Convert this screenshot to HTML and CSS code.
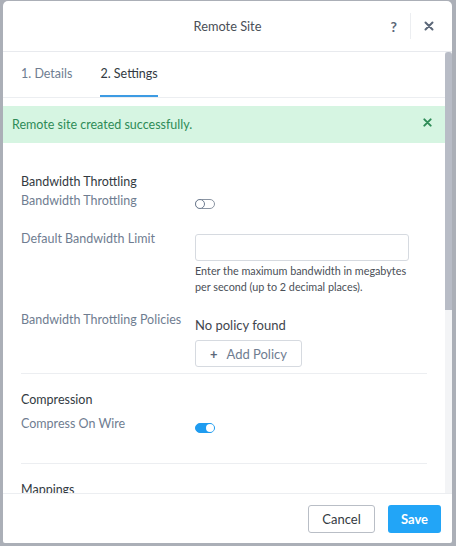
FILE: index.html
```html
<!DOCTYPE html>
<html lang="en">
<head>
    <meta charset="UTF-8">
    <meta name="viewport" content="width=device-width, initial-scale=1.0">
    <title>Remote Site</title>
    <link rel="stylesheet" href="styles.css">
</head>
<body>

<div class="modal">
    <div class="modal-header">
        <span class="modal-title">Remote Site</span>
        <div class="header-actions">
            <span class="help">?</span>
            <span class="divider-v"></span>
            <svg class="close" width="10" height="10" viewBox="0 0 10 10">
                <path d="M1.5 1.5 L8.5 8.5 M8.5 1.5 L1.5 8.5" stroke="#5b6778" stroke-width="2" stroke-linecap="round"/>
            </svg>
        </div>
    </div>

    <div class="modal-body">
        <div class="scroll-content">
            <div class="tabs">
                <span class="tab">1. Details</span>
                <span class="tab active">2. Settings</span>
            </div>

            <div class="alert">
                <span>Remote site created successfully.</span>
                <svg width="9" height="9" viewBox="0 0 10 10">
                    <path d="M1.5 1.5 L8.5 8.5 M8.5 1.5 L1.5 8.5" stroke="#2e8b57" stroke-width="2.2" stroke-linecap="round"/>
                </svg>
            </div>

            <div class="form">
                <div class="section">
                    <h3>Bandwidth Throttling</h3>
                    <div class="row row-throttle">
                        <label>Bandwidth Throttling</label>
                        <div class="control"><span class="toggle"></span></div>
                    </div>
                    <div class="row">
                        <label>Default Bandwidth Limit</label>
                        <div class="control">
                            <input type="text" class="text-input">
                            <p class="help-text">Enter the maximum bandwidth in megabytes per second (up to 2 decimal places).</p>
                        </div>
                    </div>
                    <div class="row row-policies">
                        <label>Bandwidth Throttling Policies</label>
                        <div class="control">
                            <p class="empty">No policy found</p>
                            <button class="btn btn-add"><span class="plus">+</span> Add Policy</button>
                        </div>
                    </div>
                </div>

                <div class="section">
                    <h3>Compression</h3>
                    <div class="row row-compress">
                        <label>Compress On Wire</label>
                        <div class="control"><span class="toggle on"></span></div>
                    </div>
                </div>

                <div class="section last">
                    <h3>Mappings</h3>
                </div>
            </div>
        </div>

        <!-- scroll track for the body -->
        <div class="scrollbar">
            <div class="scrollbar-thumb"></div>
        </div>
    </div>

    <div class="modal-footer">
        <button class="btn btn-cancel">Cancel</button>
        <button class="btn btn-save">Save</button>
    </div>
</div>

</body>
</html>
```

FILE: styles.css
```css
html, body {
    height: 100%;
}
body {
    font-family: Lato, "Open Sans", Arial, sans-serif;
    font-size: 12.5px;
    background-color: #abafb7;
    margin: 0;
    padding: 1px 4px 3px 3px;
    box-sizing: border-box;
}
.modal {
    height: 100%;
    background-color: white;
    border-radius: 5px 5px 2px 2px;
    display: flex;
    flex-direction: column;
    overflow: hidden;
}
.modal-header {
    height: 50px;
    flex: none;
    border-bottom: 1px solid #e8eaee;
    display: flex;
    align-items: center;
    justify-content: center;
    position: relative;
}
.modal-title {
    color: #4a4f57;
    font-size: 12.8px;
}
.header-actions {
    position: absolute;
    right: 18px;
    top: 0;
    height: 50px;
    display: flex;
    align-items: center;
}
.help {
    color: #5b6778;
    font-weight: bold;
    font-size: 14px;
}
.divider-v {
    width: 1px;
    height: 26px;
    background-color: #eceef1;
    margin: 0 13px 0 13px;
}
.close {
    display: block;
}
.modal-body {
    flex: 1;
    display: flex;
    overflow: hidden;
}
.scroll-content {
    flex: 1;
    overflow: hidden;
}
.scrollbar {
    width: 7px;
    flex: none;
    background-color: #f3f4f6;
}
.scrollbar-thumb {
    height: 258px;
    background-color: #b8bcc6;
    border-radius: 3px 3px 0 0;
}
.tabs {
    height: 45px;
    border-bottom: 1px solid #eceef1;
    padding-left: 18px;
    display: flex;
    gap: 28px;
}
.tab {
    color: #6f7d91;
    line-height: 44px;
    border-bottom: 2px solid transparent;
}
.tab.active {
    color: #333a42;
    border-bottom-color: #3d9be3;
}
.alert {
    margin-top: 8px;
    height: 37px;
    background-color: #d6f5e2;
    color: #2e8b57;
    padding: 0 13px 0 9px;
    display: flex;
    align-items: center;
    justify-content: space-between;
}
.alert svg {
    margin-top: -4px;
}
.form {
    padding: 30px 18px 0 18px;
}
.section {
    border-bottom: 1px solid #eceef1;
    padding-bottom: 6px;
    margin-bottom: 17px;
}
.section.last {
    border-bottom: none;
}
h3 {
    font-weight: normal;
    font-size: 12.5px;
    color: #333a42;
    margin: 0;
    line-height: 18px;
}
.row {
    display: flex;
}
.row label {
    width: 174px;
    flex: none;
    color: #6f7d91;
    line-height: 18px;
}
.control {
    flex: 1;
}
.row-throttle {
    margin-top: 1px;
    height: 38px;
}
.row-policies {
    margin-top: 16px;
}
.row-compress {
    margin-top: 6px;
    height: 42px;
}
.toggle {
    display: inline-block;
    width: 18px;
    height: 8px;
    margin-top: 7px;
    border: 1px solid #8b95a3;
    border-radius: 5px;
    position: relative;
}
.toggle::after {
    content: "";
    position: absolute;
    left: -1px;
    top: -1px;
    width: 8px;
    height: 8px;
    border: 1px solid #6f7d91;
    border-radius: 50%;
    background-color: white;
}
.toggle.on {
    background-color: #1f9cf0;
    border-color: #1f9cf0;
    margin-top: 8px;
}
.toggle.on::after {
    left: auto;
    right: 0;
    top: 0;
    border: none;
}
.text-input {
    display: block;
    width: 214px;
    height: 27px;
    box-sizing: border-box;
    border: 1px solid #d6dae0;
    border-radius: 3px;
    margin: 4px 0 0 0;
}
.help-text {
    margin: 2px 0 0 0;
    font-size: 10.8px;
    line-height: 16px;
    color: #4a4f57;
    width: 214px;
}
.empty {
    margin: 5px 0 0 0;
    font-size: 13px;
    color: #3f464e;
    line-height: 18px;
}
.btn {
    font-family: inherit;
    font-size: 13px;
    height: 28px;
    border-radius: 3px;
    cursor: pointer;
}
.btn-add {
    display: block;
    margin-top: 6px;
    width: 107px;
    height: 27px;
    background-color: white;
    border: 1px solid #d6dae0;
    color: #6f7d91;
}
.plus {
    color: #5b6778;
    font-weight: bold;
    margin-right: 6px;
}
.modal-footer {
    height: 49px;
    flex: none;
    border-top: 1px solid #eceef1;
    display: flex;
    justify-content: flex-end;
    align-items: center;
    gap: 13px;
    padding-right: 11px;
}
.btn-cancel {
    width: 67px;
    background-color: white;
    border: 1px solid #b9bec6;
    color: #333a42;
}
.btn-save {
    width: 53px;
    background-color: #22a5f7;
    border: none;
    color: white;
    font-weight: bold;
}
```
